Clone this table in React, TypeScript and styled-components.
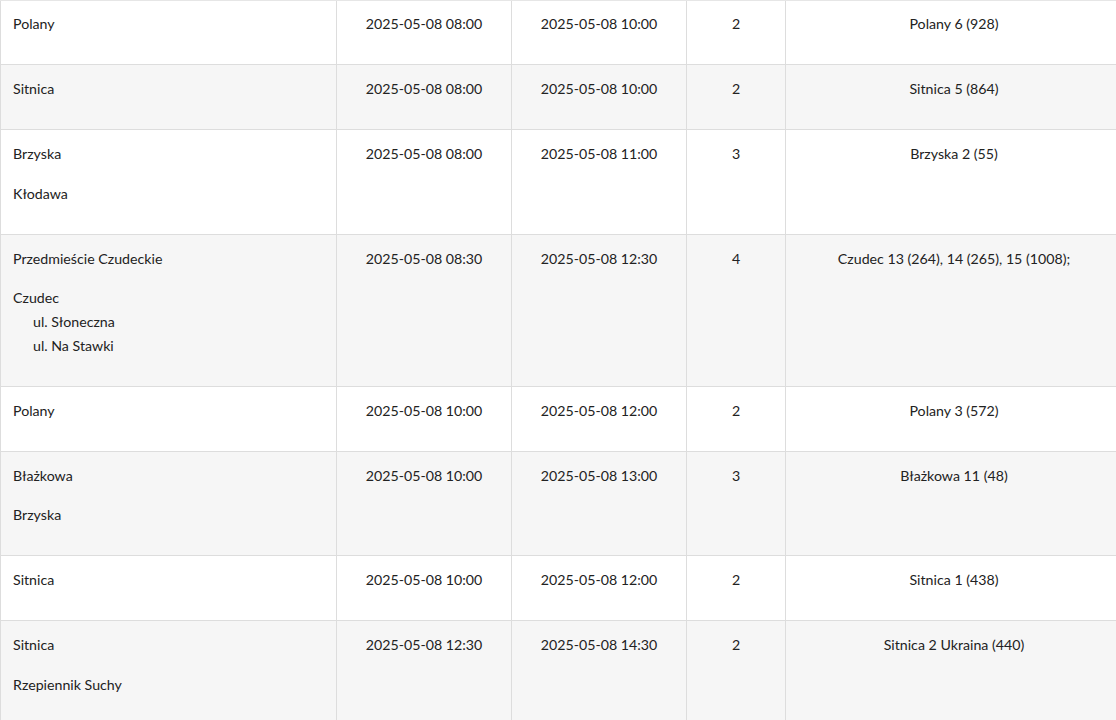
import React from "react";
import styled, { createGlobalStyle } from "styled-components";

const GlobalStyle = createGlobalStyle`
  html, body {
    margin: 0;
    padding: 0;
    overflow: hidden;
    background: #ffffff;
  }
`;

const Table = styled.table`
  width: 1123px;
  border-collapse: separate;
  border-spacing: 0;
  table-layout: fixed;
  border-top: 1px solid #e6e6e6;
  font-family: Lato, "Open Sans", sans-serif;
  font-size: 14.2px;
  line-height: 23.75px;
  color: #222222;
`;

const Row = styled.tr<{ $alt: boolean }>`
  background-color: ${(p) => (p.$alt ? "#f6f6f6" : "#ffffff")};
`;

const Cell = styled.td<{ $left?: boolean; $first?: boolean }>`
  border-right: 1px solid #dddddd;
  border-bottom: 1px solid #dddddd;
  border-left: ${(p) => (p.$left ? "1px solid #dddddd" : "none")};
  padding: ${(p) => (p.$first ? "11.25px" : "12.25px")} 12px 12.25px;
  vertical-align: top;
  text-align: ${(p) => (p.$left ? "left" : "center")};
`;

const Para = styled.p<{ $tight?: boolean }>`
  margin: 0 0 ${(p) => (p.$tight ? "0" : "15.75px")};
`;

const Streets = styled.ul`
  list-style: none;
  margin: 0 0 15.75px;
  padding: 0 0 0 20px;
`;

type Place = { name: string; streets?: string[] };

type Entry = {
  places: Place[];
  from: string;
  to: string;
  hours: string;
  stations: string;
};

const entries: Entry[] = [
  { places: [{ name: "Polany" }], from: "2025-05-08 08:00", to: "2025-05-08 10:00", hours: "2", stations: "Polany 6 (928)" },
  { places: [{ name: "Sitnica" }], from: "2025-05-08 08:00", to: "2025-05-08 10:00", hours: "2", stations: "Sitnica 5 (864)" },
  { places: [{ name: "Brzyska" }, { name: "Kłodawa" }], from: "2025-05-08 08:00", to: "2025-05-08 11:00", hours: "3", stations: "Brzyska 2 (55)" },
  {
    places: [
      { name: "Przedmieście Czudeckie" },
      { name: "Czudec", streets: ["ul. Słoneczna", "ul. Na Stawki"] },
    ],
    from: "2025-05-08 08:30",
    to: "2025-05-08 12:30",
    hours: "4",
    stations: "Czudec 13 (264), 14 (265), 15 (1008);",
  },
  { places: [{ name: "Polany" }], from: "2025-05-08 10:00", to: "2025-05-08 12:00", hours: "2", stations: "Polany 3 (572)" },
  { places: [{ name: "Błażkowa" }, { name: "Brzyska" }], from: "2025-05-08 10:00", to: "2025-05-08 13:00", hours: "3", stations: "Błażkowa 11 (48)" },
  { places: [{ name: "Sitnica" }], from: "2025-05-08 10:00", to: "2025-05-08 12:00", hours: "2", stations: "Sitnica 1 (438)" },
  { places: [{ name: "Sitnica" }, { name: "Rzepiennik Suchy" }], from: "2025-05-08 12:30", to: "2025-05-08 14:30", hours: "2", stations: "Sitnica 2 Ukraina (440)" },
];

const PlaceBlock = ({ place }: { place: Place }) => {
  if (!place.streets) return <Para>{place.name}</Para>;
  return (
    <>
      <Para $tight>{place.name}</Para>
      <Streets>
        {place.streets.map((s) => (
          <li key={s}>{s}</li>
        ))}
      </Streets>
    </>
  );
};

const App = () => {
  return (
    <>
      <GlobalStyle />
      <Table>
        <colgroup>
          <col style={{ width: 337 }} />
          <col style={{ width: 175 }} />
          <col style={{ width: 175 }} />
          <col style={{ width: 99 }} />
          <col style={{ width: 337 }} />
        </colgroup>
        <tbody>
          {entries.map((e, i) => {
            const first = i === 0;
            return (
              <Row key={i} $alt={i % 2 === 1}>
                <Cell $left $first={first}>
                  {e.places.map((p) => (
                    <PlaceBlock key={p.name} place={p} />
                  ))}
                </Cell>
                <Cell $first={first}>
                  <Para>{e.from}</Para>
                </Cell>
                <Cell $first={first}>
                  <Para>{e.to}</Para>
                </Cell>
                <Cell $first={first}>
                  <Para>{e.hours}</Para>
                </Cell>
                <Cell $first={first}>
                  <Para>{e.stations}</Para>
                </Cell>
              </Row>
            );
          })}
        </tbody>
      </Table>
    </>
  );
};

export default App;
